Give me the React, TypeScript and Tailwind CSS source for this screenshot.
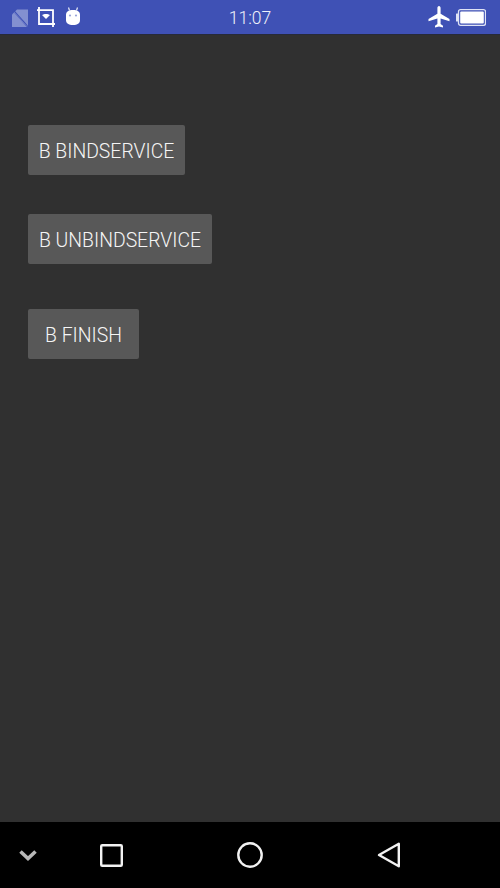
export default function App() {
  const btn = "flex h-[50px] items-center justify-center rounded-[2px] bg-[#585858] pt-[3px] text-[19.4px] font-light text-[#f5f5f5]";
  return (
    <div className="flex h-[888px] w-[500px] flex-col overflow-hidden bg-[#303030]" style={{ fontFamily: 'Roboto, "Liberation Sans", sans-serif' }}>
      <div className="relative flex h-[34px] shrink-0 items-center justify-between bg-[#3f51b5] pl-[12px] pr-[14px]">
        <div className="flex items-center gap-[9px]">
          <svg className="mt-[1px]" width="16" height="18" viewBox="0 0 16 18">
            <path d="M5 0.5H16V18H0V5.5Z" fill="#8390d0" />
            <path d="M0.5 0.5L16 18" stroke="#3f51b5" strokeWidth="1.6" />
            <path d="M2 3L15 17.5" stroke="#6d7cc8" strokeWidth="1" />
          </svg>
          <svg width="18" height="20" viewBox="0 0 18 20" fill="none" stroke="#fff">
            <path d="M2 0V3.2M2 3.2H16V17M2 3.2V17H16M16 17V20M16 17H18M0 3.2H2" strokeWidth="1.8" />
            <path d="M5 8C7 6.5 11 6.5 13 8L9 12Z" fill="#fff" stroke="none" />
          </svg>
          <svg width="18" height="20" viewBox="0 0 18 20">
            <path d="M5.5 3.5L4.5 0.5M12.5 3.5L13.5 0.5" stroke="#e8eaf6" strokeWidth="1.2" />
            <path d="M2 8C2 4.5 4.5 3 9 3C13.5 3 16 4.5 16 8V13C16 16.5 13.5 18 9 18C4.5 18 2 16.5 2 13Z" fill="#fff" />
            <circle cx="6" cy="8.5" r="1.1" fill="#9aa5da" />
            <circle cx="12" cy="8.5" r="1.1" fill="#9aa5da" />
          </svg>
        </div>
        <span className="absolute left-0 right-0 top-[8px] text-center text-[17.5px] leading-[20px] font-light text-[#f0f1fa]">11:07</span>
        <div className="flex items-center gap-[6px]">
          <svg width="22" height="24" viewBox="0 0 22 24" fill="#fff">
            <path d="M11 1C12 1 12.6 2 12.6 3.2V8.8L21.5 14V16.2L12.6 13.5V19L15 20.8V22.5L11 21.4L7 22.5V20.8L9.4 19V13.5L0.5 16.2V14L9.4 8.8V3.2C9.4 2 10 1 11 1Z" />
          </svg>
          <svg width="30" height="17" viewBox="0 0 30 17">
            <rect x="2.5" y="0.7" width="27" height="15.6" rx="2" fill="none" stroke="#dfe3f5" strokeWidth="1.3" />
            <rect x="0" y="4.5" width="2.5" height="8" rx="0.5" fill="#dfe3f5" />
            <rect x="4.2" y="2.5" width="23.6" height="12" rx="1" fill="#fff" />
          </svg>
        </div>
      </div>

      <div className="flex flex-1 flex-col items-start border-t border-[#262a3a] pl-[28px] pt-[90px]">
        <button className={`${btn} w-[157px]`}>B BINDSERVICE</button>
        <button className={`${btn} mt-[39px] w-[184px]`}>B UNBINDSERVICE</button>
        <button className={`${btn} mt-[45px] w-[111px]`}>B FINISH</button>
      </div>

      <div className="flex h-[66px] shrink-0 items-center bg-black">
        <div className="flex w-[56px] justify-center">
          <svg width="20" height="13" viewBox="0 0 20 13" fill="none">
            <path d="M2.5 2.5L10 9.5L17.5 2.5" stroke="#b8b8b8" strokeWidth="3.6" />
          </svg>
        </div>
        <div className="flex w-[110px] justify-center">
          <svg width="23" height="23" viewBox="0 0 23 23" fill="none">
            <rect x="1.2" y="1.2" width="20.6" height="20.6" rx="1" stroke="#f2f2f2" strokeWidth="2.4" />
          </svg>
        </div>
        <div className="flex w-[168px] justify-center">
          <svg width="26" height="26" viewBox="0 0 26 26" fill="none">
            <circle cx="13" cy="13" r="11.7" stroke="#f2f2f2" strokeWidth="2.4" />
          </svg>
        </div>
        <div className="flex w-[110px] justify-center">
          <svg width="24" height="26" viewBox="0 0 24 26" fill="none">
            <path d="M21.8 1.8V24.2L2 13Z" stroke="#f2f2f2" strokeWidth="2.4" strokeLinejoin="round" />
          </svg>
        </div>
      </div>
    </div>
  );
}
